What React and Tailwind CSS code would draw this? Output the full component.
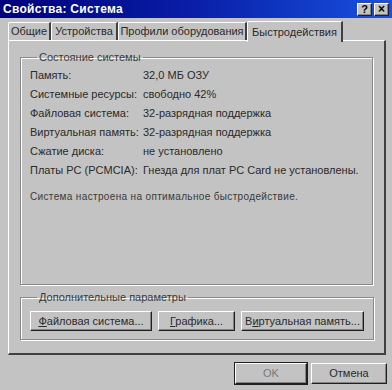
import React from "react";

const font = { fontFamily: '"Liberation Sans", Arial, sans-serif' };

// кнопка в стиле Win95
const Btn = ({ children, className = "" }) => (
  <div
    className={`flex items-center justify-center bg-[#c3c3c3] text-[11px] text-[#2a2a2a] border border-t-white border-l-white border-r-[#202020] border-b-[#202020] shadow-[inset_-1px_-1px_0_#848484] ${className}`}
  >
    {children}
  </div>
);

const Group = ({ title, className = "", children }) => (
  <fieldset
    className={`border border-[#8a8a8a] shadow-[1px_1px_0_#fff,inset_1px_1px_0_#fff] ${className}`}
  >
    <legend className="ml-[7px] px-[2px] text-[11px] leading-[12px] text-[#3a3a3a]">
      {title}
    </legend>
    {children}
  </fieldset>
);

const rows = [
  ["Память:", "32,0 МБ ОЗУ"],
  ["Системные ресурсы:", "свободно 42%"],
  ["Файловая система:", "32-разрядная поддержка"],
  ["Виртуальная память:", "32-разрядная поддержка"],
  ["Сжатие диска:", "не установлено"],
  ["Платы PC (PCMCIA):", "Гнезда для плат PC Card не установлены."],
];

export default function App() {
  return (
    <div
      className="w-[392px] h-[390px] bg-[#c3c3c3] flex flex-col overflow-hidden"
      style={font}
    >
      {/* заголовок окна */}
      <div className="h-[18px] flex items-center pl-[3px] pr-[3px] bg-gradient-to-r from-[#00007b] via-[#0a1ea8] to-[#1a50e0]">
        <span className="text-white font-bold text-[12px] tracking-[0.3px]">
          Свойства: Система
        </span>
        <div className="ml-auto flex gap-[2px]">
          <Btn className="w-[15px] h-[13px] !text-[11px] font-bold !text-black">?</Btn>
          <Btn className="w-[15px] h-[13px] !text-[12px] font-bold !text-black">×</Btn>
        </div>
      </div>

      {/* вкладки */}
      <div className="flex items-end pl-[8px] pt-[3px] h-[22px] text-[11px] text-[#2a2a2a]">
        {[
          ["Общие", "w-[43px]"],
          ["Устройства", "w-[67px]"],
          ["Профили оборудования", "w-[129px]"],
        ].map(([t, w]) => (
          <div
            key={t}
            className={`${w} h-[18px] flex items-center justify-center border-t border-l border-t-white border-l-white border-r-2 border-r-[#404040] rounded-tl-[2px] mt-[2px]`}
          >
            {t}
          </div>
        ))}
        <div className="w-[96px] h-[21px] -mb-[2px] relative z-10 bg-[#c3c3c3] flex items-center justify-center border-t border-l border-t-white border-l-white border-r-2 border-r-[#404040] rounded-tl-[2px]">
          Быстродействия
        </div>
      </div>

      {/* панель вкладки */}
      <div className="ml-[8px] w-[378px] h-[315px] border border-t-white border-l-white border-r-2 border-b-2 border-r-[#404040] border-b-[#404040] px-[11px] pt-[10px]">
        <Group title="Состояние системы" className="h-[234px] w-[353px] px-[9px]">
          <div className="grid grid-cols-[113px_1fr] text-[11px] text-[#2a2a2a] mt-[3px]">
            {rows.map(([a, b]) => (
              <React.Fragment key={a}>
                <div className="h-[19px] leading-[19px] whitespace-nowrap">{a}</div>
                <div className="h-[19px] leading-[19px] whitespace-nowrap">{b}</div>
              </React.Fragment>
            ))}
          </div>
          <div className="mt-[9px] text-[10px] tracking-[0.35px] text-[#3a3a3a]">
            Система настроена на оптимальное быстродействие.
          </div>
        </Group>

        <Group title="Дополнительные параметры" className="mt-[6px] h-[49px] w-[353px] px-[9px]">
          <div className="flex gap-[6px] mt-[8px]">
            <Btn className="w-[122px] h-[20px]">
              <span><u>Ф</u>айловая система...</span>
            </Btn>
            <Btn className="w-[77px] h-[20px]">
              <span><u>Г</u>рафика...</span>
            </Btn>
            <Btn className="w-[123px] h-[20px]">
              <span>В<u>и</u>ртуальная память...</span>
            </Btn>
          </div>
        </Group>
      </div>

      {/* нижние кнопки */}
      <div className="flex justify-end gap-[4px] pr-[5px] mt-[8px]">
        <Btn className="w-[72px] h-[21px] !text-[#7a7a7a] outline outline-1 outline-[#202020]">OK</Btn>
        <Btn className="w-[76px] h-[21px]">Отмена</Btn>
      </div>
    </div>
  );
}
